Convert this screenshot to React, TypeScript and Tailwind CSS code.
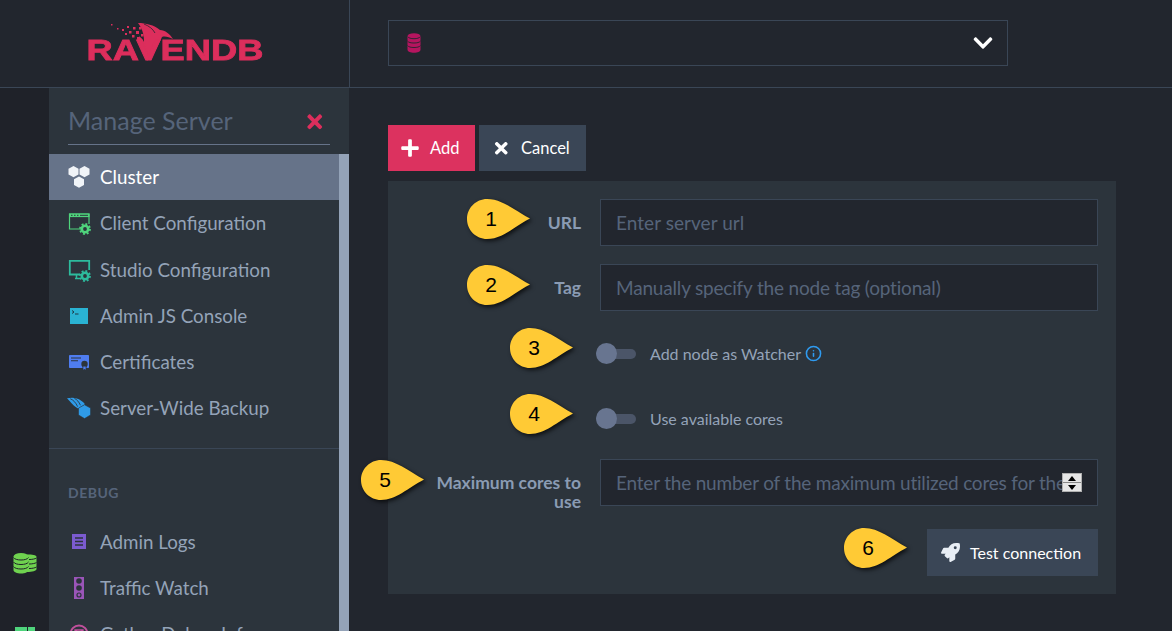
import { Info } from "lucide-react"
import { FaPlus, FaTimes, FaChevronDown, FaRocket } from "react-icons/fa"

const Gear = ({ x, y, color }: { x: number; y: number; color: string }) => (
  <g>
    <circle cx={x} cy={y} r="3.200" fill="none" stroke={color} strokeWidth="2.600" />
    <circle cx={x} cy={y} r="5" fill="none" stroke={color} strokeWidth="1.800" strokeDasharray="1.900 2" />
  </g>
)

const ClusterIcon = () => (
  <svg width="26" height="26" viewBox="0 0 24 24" fill="#f1f4f8">
    <path d="M6.500 1l5 2.800v5.600l-5 2.800-5-2.800V3.800z" />
    <path d="M17.500 1l5 2.800v5.600l-5 2.800-5-2.800V3.800z" />
    <path d="M12 11.500l5 2.800v5.600l-5 2.800-5-2.800v-5.600z" />
  </svg>
)

const ClientIcon = () => (
  <svg width="26" height="26" viewBox="0 0 24 24" fill="none">
    <path d="M14 18H2.500V3H22v10" stroke="#4fd47c" strokeWidth="1.200" />
    <rect x="2" y="2.500" width="20.500" height="3.600" fill="#4fd47c" />
    <path d="M4 4.300h1.500M7 4.300h1.500M10 4.300h1.500M13 4.300h8" stroke="#2c343c" strokeWidth="1" />
    <Gear x={18} y={18} color="#4fd47c" />
  </svg>
)

const StudioIcon = () => (
  <svg width="26" height="26" viewBox="0 0 24 24" fill="none">
    <path d="M13 16.500H2.800V2.800h19.400V12" stroke="#2dbb9d" strokeWidth="1.800" />
    <path d="M8 20.500h5M9.500 17v3.500" stroke="#2dbb9d" strokeWidth="1.500" />
    <Gear x={18} y={18} color="#2dbb9d" />
  </svg>
)

const ConsoleIcon = () => (
  <svg width="24" height="24" viewBox="0 0 24 24">
    <rect x="3" y="4" width="18" height="16" fill="#2ab3d3" />
    <path d="M5 6.500l2 1.500-2 1.500" fill="none" stroke="#1c2b35" strokeWidth="0.900" />
    <path d="M8 10h3.500" stroke="#1c2b35" strokeWidth="0.900" />
  </svg>
)

const CertIcon = () => (
  <svg width="26" height="26" viewBox="0 0 24 24">
    <rect x="2" y="5" width="20" height="13" rx="0.800" fill="#4f7df0" />
    <path d="M4 8h10M4 10.800h7" stroke="#2c343c" strokeWidth="1.100" />
    <circle cx="17.500" cy="14" r="3.200" fill="#2c343c" />
    <path d="M15.500 15h4v4.500h-4z" fill="#2c343c" />
    <path d="M16.300 16.500h2.400v3.300l-1.200-.8-1.200.8z" fill="#4f7df0" />
  </svg>
)

const BackupIcon = () => (
  <svg width="26" height="24" viewBox="0 0 26 24">
    <path d="M0 1.500C5 .5 11 .5 15 4c2 1.200 3.500 2.500 4.500 4L12 12.500C7 10 5 6.500 0 1.500z" fill="#2f9be8" />
    <path d="M3.500 2c3 1 6 4 8 8.500M8 1.500c3 1.500 5 4 6.500 7.500" stroke="#2c343c" strokeWidth="0.900" fill="none" />
    <path d="M19 8.500l6.500 3.600v7.400L19 23.500l-6.500-4v-7.400z" fill="#2f9be8" stroke="#2c343c" strokeWidth="0.600" />
  </svg>
)

const LogsIcon = () => (
  <svg width="24" height="24" viewBox="0 0 24 24">
    <rect x="5" y="4" width="14" height="15" fill="#7b5bd0" />
    <path d="M8 8h8M8 11.500h8M8 15h8" stroke="#2c343c" strokeWidth="1.300" />
  </svg>
)

const TrafficIcon = () => (
  <svg width="24" height="24" viewBox="0 0 24 24">
    <rect x="7" y="1" width="10" height="22" fill="#9a55b8" />
    <circle cx="12" cy="5" r="2.800" fill="#2c343c" />
    <circle cx="12" cy="12" r="2.800" fill="#2c343c" />
    <circle cx="12" cy="19" r="2" fill="none" stroke="#2c343c" strokeWidth="1.200" />
  </svg>
)

const DebugIcon = () => (
  <svg width="24" height="24" viewBox="0 0 24 24" fill="none">
    <circle cx="12" cy="12" r="8.500" stroke="#c0509c" strokeWidth="1.800" />
    <path d="M8 8h8v6H8zM8 8l4 3 4-3" stroke="#c0509c" strokeWidth="1.300" />
  </svg>
)

const DbIcon = ({ color, line }: { color: string; line: string }) => (
  <svg width="14" height="20" viewBox="0 0 14 20">
    <ellipse cx="7" cy="3.200" rx="6.500" ry="3" fill={color} />
    <path d="M.5 3.500v13.300c0 1.700 3 3 6.500 3s6.500-1.300 6.500-3V3.500z" fill={color} />
    <path d="M.5 3.500c1 1.500 3.500 2.200 6.500 2.200s5.500-.7 6.500-2.200M.5 8c1 1.500 3.500 2 6.500 2s5.500-.5 6.500-2M.5 12.500c1 1.500 3.500 2 6.500 2s5.500-.5 6.500-2" stroke={line} strokeWidth=".9" fill="none" />
  </svg>
)

const RailDb = () => (
  <svg width="24" height="22" viewBox="0 0 24 22">
    <path d="M14 2.500c5 0 9.500.5 9.500 2.500v12c0 2-4.500 3-9.500 3z" fill="#6fd24f" />
    <path d="M16 7.500c3 0 6-.5 7.500-1.500M16 12c3 0 6-.5 7.500-1.500M16 16.500c3 0 6-.5 7.500-1.500" stroke="#1f2229" strokeWidth="1" fill="none" />
    <ellipse cx="8" cy="4.500" rx="7.500" ry="3.500" fill="#6fd24f" />
    <path d="M.5 5v13c0 2 3.500 3.500 7.500 3.500s7.500-1.500 7.500-3.500V5z" fill="#6fd24f" />
    <path d="M.5 5.500c1 1.700 4 2.500 7.500 2.500s6.500-.8 7.500-2.500M.5 10c1 1.700 4 2.500 7.500 2.500s6.500-.8 7.500-2.500M.5 14.500c1 1.700 4 2.500 7.500 2.500s6.500-.8 7.500-2.500" stroke="#1f2229" strokeWidth="1" fill="none" />
  </svg>
)

const Pin = ({ n, className }: { n: number; className: string }) => (
  <div className={`absolute w-[66px] h-[44px] ${className}`}>
    <svg width="66" height="44" viewBox="0 0 66 44" className="absolute left-0 top-0 drop-shadow-[2px_2px_2px_rgba(0,0,0,0.7)]">
      <path d="M21 1C36 1 48 12 64 20.500 48 29 36 41 21 41 10 41 1 32 1 21S10 1 21 1z" fill="#ffca35" />
    </svg>
    <span className="absolute left-0 top-0 w-[50px] h-[41px] flex items-center justify-center font-['Liberation_Sans'] text-[21px] text-black">{n}</span>
  </div>
)

const NavItem = ({ icon, label, active }: { icon: React.ReactNode; label: string; active?: boolean }) => (
  <div className={`h-[46.250px] shrink-0 flex items-center pl-[18px] gap-[9px] text-[18.800px] ${active ? "bg-[#667389] text-white" : "text-[#94a3b8]"}`}>
    <span className="w-[24px] h-[24px] flex items-center justify-center shrink-0">{icon}</span>
    <span className="whitespace-nowrap">{label}</span>
  </div>
)

const Toggle = ({ label, info }: { label: string; info?: boolean }) => (
  <div className="flex items-center ml-[208px] h-[21px]">
    <div className="relative w-[40px] h-[21px] flex items-center">
      <div className="w-full h-[10px] rounded-full bg-[#4b5568]" />
      <div className="absolute left-0 top-0 w-[21px] h-[21px] rounded-full bg-[#687590]" />
    </div>
    <span className="ml-[14px] text-[16px] text-[#94a3b8]">{label}</span>
    {info && <Info size={17} strokeWidth={2.200} className="ml-[4px] text-[#2f9bf0]" />}
  </div>
)

const Field = ({ label, placeholder, spacing }: { label: string; placeholder: string; spacing: string }) => (
  <div className="flex h-[47px]">
    <label className="w-[193px] mr-[19px] mt-[14px] pl-[44px] text-right text-[17.500px] font-bold text-[#8a9bb3] leading-[19px]">{label}</label>
    <input
      placeholder={placeholder}
      className={`w-[498px] h-full bg-[#22262e] border border-[#3a4656] px-[15px] text-[19px] placeholder:text-[#56647a] outline-none ${spacing}`}
    />
  </div>
)

export default function App() {
  return (
    <div className="relative w-[1172px] h-[631px] overflow-hidden bg-[#22262e] font-['Lato',sans-serif] flex flex-col">
      <header className="h-[88px] shrink-0 flex border-b border-[#3a4656]">
        <div className="w-[350px] shrink-0 border-r border-[#3a4656] relative">
          <svg width="90" height="42" viewBox="0 0 90 42" className="absolute left-[108px] top-[22px]">
            <path d="M30 1c8 0 16 2 22 7 5 0 10 4 13 9-4-2-8-3-11-2-3 7-8 16-15 24-3-8-6-17-8-25 1 1 4 3 5 6 0-8-2-14-6-19z" fill="#dc2e5c" />
            <path d="M36 2c5 2 9 5 11 9" stroke="#22262e" strokeWidth="0.800" fill="none" />
            <g fill="#dc2e5c">
              <rect x="3" y="2" width="1.500" height="1.500" /><rect x="9" y="6" width="1.500" height="1.500" /><rect x="14" y="7" width="2" height="2" />
              <rect x="19" y="4" width="2" height="2" /><rect x="17" y="11" width="2" height="2" /><rect x="21" y="9" width="2.500" height="2.500" />
              <rect x="25" y="5" width="2.500" height="2.500" /><rect x="24" y="13" width="2.500" height="2.500" /><rect x="28" y="9" width="3" height="3" />
              <rect x="29" y="15" width="3" height="3" /><rect x="33" y="12" width="2.500" height="2.500" /><rect x="31" y="5" width="2.500" height="2.500" />
            </g>
          </svg>
          <span className="absolute left-[88px] top-[34px] w-[174px] text-center origin-center scale-x-[1.210] font-['Liberation_Sans'] font-bold text-[30px] leading-[32px] text-[#dc2e5c] [-webkit-text-stroke:0.8px_#dc2e5c]">RAVENDB</span>
        </div>
        <div className="flex-1 pl-[38px] pt-[20px]">
          <div className="w-[620px] h-[46px] border border-[#3a4656] flex items-center justify-between pl-[18px] pr-[13px]">
            <DbIcon color="#b5155f" line="#22262e" />
            <FaChevronDown size={22} className="text-white" />
          </div>
        </div>
      </header>

      <div className="flex flex-1 min-h-0">
        <div className="w-[49px] shrink-0 bg-[#1f2229] flex flex-col items-center pt-[464px] gap-[53px]">
          <div className="shrink-0"><RailDb /></div>
          <div className="w-[20px] h-[20px] shrink-0 flex gap-[1px]">
            <div className="w-[12px] h-full bg-[#4fd47c]" />
            <div className="w-[7px] h-full bg-[#4fd47c]" />
          </div>
        </div>

        <aside className="w-[300px] shrink-0 bg-[#2c343c] flex flex-col">
          <div className="mx-[19px] h-[57px] pt-[16px] border-b border-[#667389] flex items-start justify-between shrink-0">
            <span className="text-[25px] leading-[32px] text-[#56647a]">Manage Server</span>
            <FaTimes size={21.500} className="text-[#dc2e5c] mt-[7px] mr-[5px]" />
          </div>
          <div className="flex flex-1 mt-[9px] min-h-0">
            <nav className="flex-1 flex flex-col">
              <NavItem active icon={<ClusterIcon />} label="Cluster" />
              <NavItem icon={<ClientIcon />} label="Client Configuration" />
              <NavItem icon={<StudioIcon />} label="Studio Configuration" />
              <NavItem icon={<ConsoleIcon />} label="Admin JS Console" />
              <NavItem icon={<CertIcon />} label="Certificates" />
              <NavItem icon={<BackupIcon />} label="Server-Wide Backup" />
              <div className="mt-[16px] border-t border-[#3a4656] pt-[35px] pb-[18px] pl-[19px] text-[14px] leading-[17px] font-bold tracking-[0.5px] text-[#56647a] shrink-0">DEBUG</div>
              <NavItem icon={<LogsIcon />} label="Admin Logs" />
              <NavItem icon={<TrafficIcon />} label="Traffic Watch" />
              <NavItem icon={<DebugIcon />} label="Gather Debug Info" />
            </nav>
            <div className="w-[10px] shrink-0 bg-[#94a3b8]" />
          </div>
        </aside>

        <main className="flex-1 pl-[39px] pt-[37px]">
          <div className="flex gap-[4px] h-[46px]">
            <button className="w-[87px] bg-[#dc325f] text-white text-[16.500px] flex items-center pl-[12px] gap-[10px]">
              <FaPlus size={20} />
              Add
            </button>
            <button className="w-[107px] bg-[#3a4656] text-white text-[16.500px] flex items-center pl-[13px] gap-[10.500px]">
              <FaTimes size={18.500} />
              Cancel
            </button>
          </div>
          <div className="mt-[10px] w-[728px] h-[413px] bg-[#2c343c] pt-[18px]">
            <Field label="URL" placeholder="Enter server url" spacing="tracking-[0.05px]" />
            <div className="h-[18px]" />
            <Field label="Tag" placeholder="Manually specify the node tag (optional)" spacing="tracking-[-0.18px]" />
            <div className="h-[32px]" />
            <Toggle label="Add node as Watcher" info />
            <div className="h-[44px]" />
            <Toggle label="Use available cores" />
            <div className="h-[30px]" />
            <Field label="Maximum cores to use" placeholder="Enter the number of the maximum utilized cores for the node" spacing="tracking-[-0.2px]" />
            <div className="flex justify-end pr-[18px] mt-[23px]">
              <button className="w-[171px] h-[47px] bg-[#3a4656] text-white text-[16px] flex items-center pl-[14px] gap-[10px]">
                <FaRocket size={19} className="text-[#e8eef5]" />
                Test connection
              </button>
            </div>
          </div>
        </main>
      </div>

      {/* native number spinner */}
      <div className="absolute left-[1062px] top-[473px] w-[20px] h-[19px] bg-white border border-[#b0b0b0] flex flex-col">
        <div className="flex-1 bg-[#e6e6e6] border-b border-[#888] flex items-center justify-center">
          <span className="w-0 h-0 border-x-[4px] border-x-transparent border-b-[5px] border-b-black" />
        </div>
        <div className="flex-1 bg-[#e6e6e6] flex items-center justify-center">
          <span className="w-0 h-0 border-x-[4px] border-x-transparent border-t-[5px] border-t-black" />
        </div>
      </div>

      <Pin n={1} className="left-[466px] top-[198px]" />
      <Pin n={2} className="left-[466px] top-[264px]" />
      <Pin n={3} className="left-[509px] top-[327px]" />
      <Pin n={4} className="left-[509px] top-[393px]" />
      <Pin n={5} className="left-[360px] top-[459px]" />
      <Pin n={6} className="left-[843px] top-[527px]" />
    </div>
  )
}
